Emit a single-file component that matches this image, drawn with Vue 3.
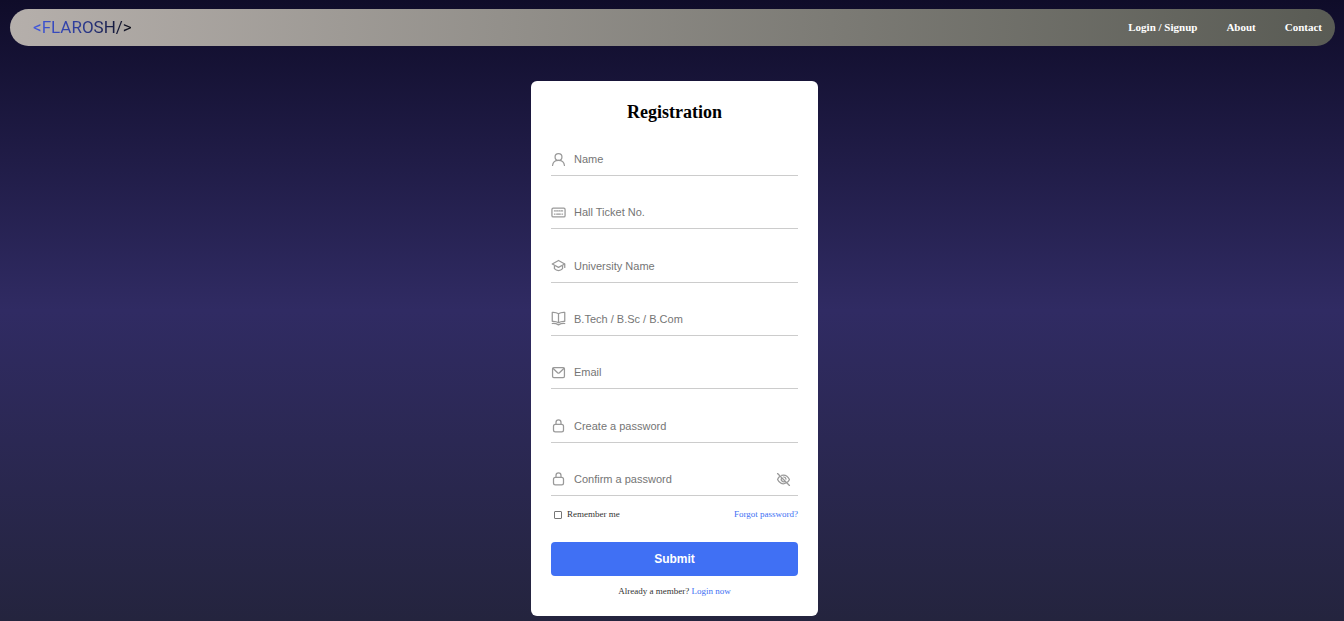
<script setup>
import { reactive, ref } from 'vue'

const links = ['Login / Signup', 'About', 'Contact']

const fields = [
  { id: 'name', label: 'Name', type: 'text', icon: 'user' },
  { id: 'ticket', label: 'Hall Ticket No.', type: 'text', icon: 'ticket' },
  { id: 'university', label: 'University Name', type: 'text', icon: 'cap' },
  { id: 'course', label: 'B.Tech / B.Sc / B.Com', type: 'text', icon: 'book' },
  { id: 'email', label: 'Email', type: 'email', icon: 'mail' },
  { id: 'password', label: 'Create a password', type: 'password', icon: 'lock' },
  { id: 'confirm', label: 'Confirm a password', type: 'password', icon: 'lock', toggle: true }
]

const form = reactive({})
const remember = ref(false)
const visible = ref(false)

const typeOf = (field) => (field.type === 'password' && visible.value ? 'text' : field.type)
</script>

<template>
  <div class="page">
    <header class="navbar">
      <a class="logo" href="#">&lt;FLAROSH/&gt;</a>
      <nav class="links">
        <a v-for="link in links" :key="link" href="#">{{ link }}</a>
      </nav>
    </header>

    <main class="content">
      <form class="card" @submit.prevent>
        <h1>Registration</h1>

        <div class="fields">
          <div v-for="field in fields" :key="field.id" class="field">
            <label :for="field.id" :aria-label="field.label">
              <svg class="icon" viewBox="0 0 24 24" aria-hidden="true">
                <template v-if="field.icon === 'user'">
                  <circle cx="12" cy="8" r="5.500" />
                  <path d="M2.500 21.500c.5-5 4.500-8 9.500-8s9 3 9.500 8" />
                </template>
                <template v-else-if="field.icon === 'ticket'">
                  <rect x="1.500" y="5" width="21" height="14" rx="2" />
                  <path d="M5.500 9.500h1.500M9 9.500h1.500M12.500 9.500h1.500M16 9.500h2.500M5.500 14.500h1M9 14.500h6M17.500 14.500h1" />
                </template>
                <template v-else-if="field.icon === 'cap'">
                  <path d="M12 4 2 9.500 12 15l10-5.500zM5.500 11.500V17c2 2.300 4 3 6.500 3s4.500-.7 6.500-3v-5.500M22 9.500V15" />
                </template>
                <template v-else-if="field.icon === 'book'">
                  <path d="M12 4.500C9 2.500 6 2 2 2.300V16.500c4-.3 7 .2 10 2.200 3-2 6-2.500 10-2.200V2.300C18 2 15 2.500 12 4.500zM12 4.500v14M2 20c4-.3 7 .5 10 2.200 3-1.700 6-2.500 10-2.200" />
                </template>
                <template v-else-if="field.icon === 'mail'">
                  <rect x="2.500" y="4" width="19" height="16" rx="2" />
                  <path d="m3.500 5.500 7 7q1.500 1.300 3 0l7-7" />
                </template>
                <template v-else>
                  <rect x="4" y="10" width="16" height="12" rx="3" />
                  <path d="M8 10V7a4 4 0 0 1 8 0v3" />
                </template>
              </svg>
            </label>
            <input
              :id="field.id"
              v-model="form[field.id]"
              :type="typeOf(field)"
              :placeholder="field.label"
            />
            <button
              v-if="field.toggle"
              class="toggle"
              type="button"
              aria-label="Show password"
              @click="visible = !visible"
            >
              <svg class="icon" viewBox="0 0 24 24" aria-hidden="true">
                <path d="M2.500 2.500 21.500 21.500M9 5.500c5.500-1.500 10 1.500 12.500 6.500-.7 1.500-1.700 2.800-2.900 3.900M5.700 7.200C4.400 8.500 3.300 10 2.500 12c2.700 6 8.500 8.700 14 5.300M9 9.500a4 4 0 0 0 5.500 5.500M12.500 8a4 4 0 0 1 3.500 3.500" />
              </svg>
            </button>
          </div>
        </div>

        <div class="options">
          <label class="remember">
            <input v-model="remember" type="checkbox" />
            <span>Remember me</span>
          </label>
          <a href="#">Forgot password?</a>
        </div>

        <button class="submit" type="submit">Submit</button>

        <p class="member">Already a member? <a href="#">Login now</a></p>
      </form>
    </main>
  </div>
</template>

<style>
body {
  margin: 0;
}
</style>

<style scoped>
.page {
  box-sizing: border-box;
  min-height: 100vh;
  padding: 9px 9px 5px 10px;
  background: linear-gradient(to bottom, #0f0c29, #302b63, #24243e);
  font-family: "Liberation Serif", "Times New Roman", serif;
}

a {
  color: #4070f4;
  text-decoration: none;
}

.navbar {
  display: flex;
  align-items: center;
  justify-content: space-between;
  box-sizing: border-box;
  height: 37px;
  padding: 0 13px 2px 23px;
  border-radius: 19px;
  background: linear-gradient(to right, #b5afab, #595b54);
}

.logo {
  background: linear-gradient(to right, #4158e0, #2b3990 50%, #0c0c14);
  background-clip: text;
  color: transparent;
  font: 400 17px/20px Roboto, sans-serif;
}

.links {
  display: flex;
  gap: 29px;
}

.links a {
  color: #fff;
  font-size: 11px;
  font-weight: 700;
}

.content {
  display: flex;
  justify-content: center;
  padding: 35px 0 0 4px;
}

.card {
  box-sizing: border-box;
  width: 287px;
  padding: 20px 20px 19px;
  border-radius: 6px;
  background: #fff;
}

h1 {
  margin: 0;
  font-size: 18px;
  line-height: 22px;
  text-align: center;
}

.fields {
  display: flex;
  flex-direction: column;
  justify-content: space-between;
  height: 353px;
  margin-top: 20px;
}

.field {
  display: flex;
  align-items: center;
  box-sizing: border-box;
  height: 33px;
  border-bottom: 1px solid #ccc;
}

.field label {
  display: flex;
  margin-right: 8px;
}

.icon {
  display: block;
  width: 15px;
  height: 15px;
  fill: none;
  stroke: #999;
  stroke-width: 2;
  stroke-linecap: round;
  stroke-linejoin: round;
}

.field input {
  flex: 1;
  min-width: 0;
  padding: 0;
  border: 0;
  outline: 0;
  background: none;
  font: 11px/16px "Liberation Sans", Arial, sans-serif;
}

.field input::placeholder {
  color: #757575;
}

.toggle {
  margin: 0 7px 0 0;
  padding: 2px 0 0;
  border: 0;
  background: none;
}

.options {
  display: flex;
  align-items: center;
  justify-content: space-between;
  margin-top: 12px;
  font-size: 9px;
  line-height: 12px;
}

.remember {
  display: flex;
  align-items: center;
  gap: 5px;
  color: #333;
}

.remember input {
  appearance: none;
  box-sizing: border-box;
  width: 8px;
  height: 8px;
  margin: 2px 0 0 3px;
  border: 1px solid #767676;
  border-radius: 1px;
  background: #fff;
}

.remember input:checked {
  background: #4070f4;
}

.submit {
  display: block;
  width: 100%;
  height: 34px;
  margin-top: 22px;
  padding: 0;
  border: 0;
  border-radius: 4px;
  background: #4070f4;
  color: #fff;
  font: 700 12px/16px "Liberation Sans", Arial, sans-serif;
}

.member {
  margin: 9px 0 0;
  color: #333;
  font-size: 9px;
  line-height: 12px;
  text-align: center;
}
</style>
